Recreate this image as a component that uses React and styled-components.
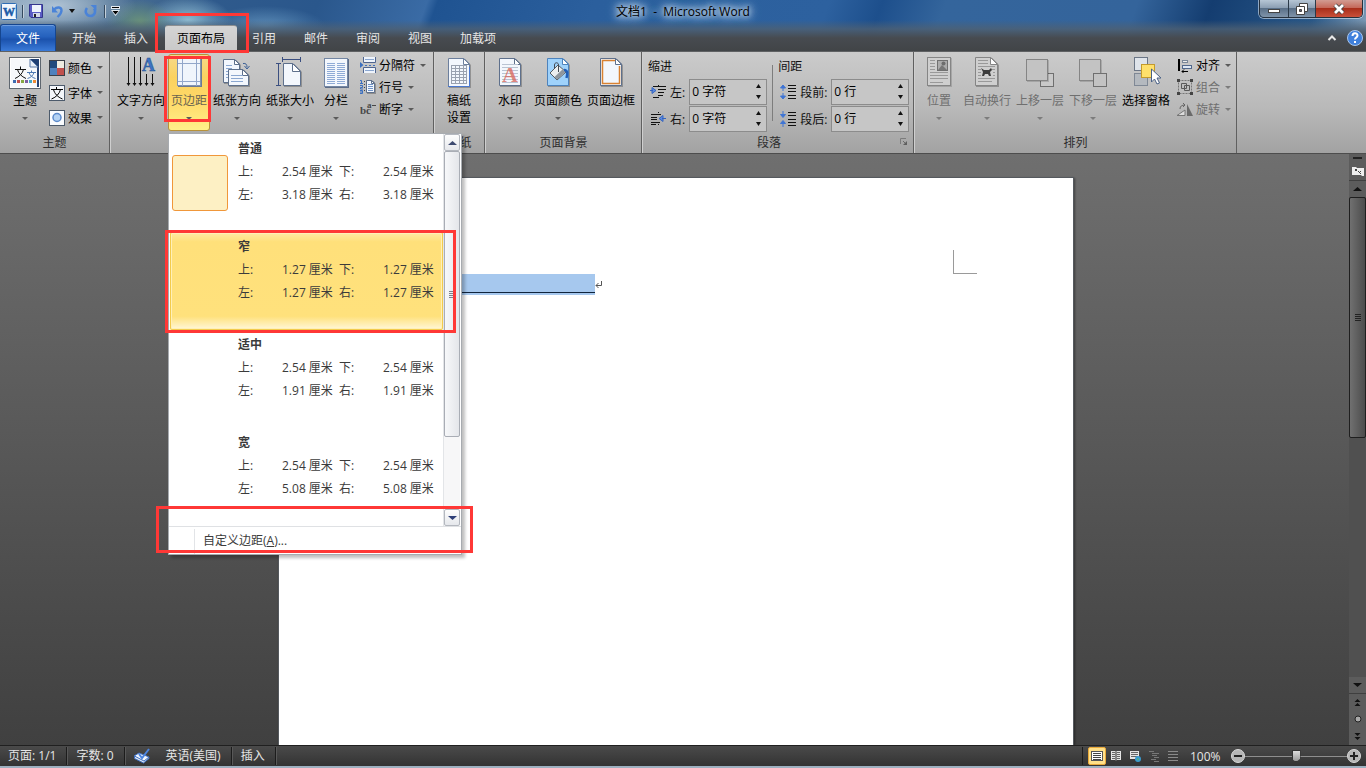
import React, { Fragment } from 'react';
import styled, { createGlobalStyle, css } from 'styled-components';

const GlobalStyle = createGlobalStyle`
  * {
    box-sizing: border-box;
  }

  body {
    margin: 0;
    background: #404040;
  }

  body, button, input {
    font-family: 'Open Sans', 'Noto Sans CJK SC', sans-serif;
    font-size: 12px;
    color: #111;
  }

  button {
    border: 0;
    padding: 0;
    background: none;
  }

  svg {
    display: block;
    flex: none;
  }
`;

const Window = styled.div`
  display: flex;
  flex-direction: column;
  min-height: 100vh;
`;

/* ---------- title bar and tabs ---------- */

const Header = styled.header`
  background:
    linear-gradient(180deg, transparent 20px, rgba(78, 96, 114, 0.8) 29px, #474b50 38px, #414447 100%),
    radial-gradient(ellipse 80px 28px at 56px 6px, rgba(200, 215, 228, 0.75), transparent),
    radial-gradient(ellipse 34px 22px at 140px 22px, rgba(110, 150, 120, 0.9), transparent),
    radial-gradient(ellipse 44px 24px at 188px 20px, rgba(150, 195, 215, 0.9), transparent),
    radial-gradient(ellipse 60px 20px at 265px 26px, rgba(110, 160, 200, 0.7), transparent),
    linear-gradient(110deg, #7f9bb5 0, #4b6f92 110px, #2f5a8c 200px, #2a578c 300px, #3a6ba5 402px, #1f5391 412px, #2b5f9d 560px, #2d619f 780px, #1d4f8c 830px, #34659c 890px, #34649b 1070px, #143d70 1140px, #285787 1240px, #8ba5bd 100%);
`;

const TitleBar = styled.div`
  display: grid;
  grid-template-columns: 1fr auto 1fr;
  align-items: start;
  height: 24px;
`;

const QuickBar = styled.div`
  display: flex;
  align-items: center;
  height: 22px;
  padding-left: 1px;
`;

const QuickButton = styled.button`
  display: flex;
  margin-right: ${props => props.$gap || 4}px;
`;

const Divider = styled.span`
  width: 1px;
  height: 13px;
  margin-right: 6px;
  background: #34495e;
  box-shadow: 1px 0 #c3cfda;
`;

const Title = styled.h1`
  margin: 0;
  font-size: 12px;
  font-weight: 400;
  line-height: 24px;
  white-space: pre;
  color: #000;
  text-shadow: 0 0 5px #b9cfe6, 0 0 7px #b9cfe6, 0 0 9px #b9cfe6, 0 0 11px #a9c3de, 0 0 14px #a9c3de;
`;

const WindowButtons = styled.div`
  display: flex;
  justify-self: end;
  height: 18px;
  margin-right: 3px;
  border: 1px solid #26313d;
  border-top: 0;
  border-radius: 0 0 5px 5px;
  box-shadow: 0 0 0 1px rgba(220, 232, 244, 0.6);
  overflow: hidden;
`;

const WindowButton = styled.button`
  display: flex;
  align-items: center;
  justify-content: center;
  width: ${props => props.$width}px;
  border-left: ${props => (props.$first ? 0 : 1)}px solid #2b3a49;
  background: ${props =>
    props.$close
      ? 'linear-gradient(#d29c92, #c5695a 45%, #a92f1b 50%, #c9503a)'
      : 'linear-gradient(#b6c6d5, #8c9fb3 45%, #5a7088 50%, #7f94aa)'};
`;

const Tabs = styled.nav`
  display: flex;
  align-items: flex-end;
  height: 27px;
`;

const FileTab = styled.button`
  width: 56px;
  height: 27px;
  margin-right: 2px;
  border: 1px solid #16468f;
  border-bottom: 0;
  border-radius: 3px 3px 0 0;
  background: linear-gradient(#3f7bd0, #2561bd 45%, #1b52ad 55%, #3a7ad8);
  box-shadow: inset 0 1px #6d9de0;
  color: #fff;
`;

const Tab = styled.button`
  position: relative;
  height: 26px;
  padding: 0 14px 1px;
  color: #e6e6e6;
  white-space: nowrap;

  ${props => props.$active && css`
    margin: 0 1px 0 3px;
    padding: 0 12px 1px;
    border: 1px solid #8d8f91;
    border-width: 1px 0 0;
    border-radius: 3px 3px 0 0;
    background: linear-gradient(#d5d5d5, #c8c8c8);
    color: #000;
  `}
`;

const TabTools = styled.div`
  display: flex;
  align-items: center;
  gap: 8px;
  height: 27px;
  margin-left: auto;
  padding-right: 3px;
`;

const IconButton = styled.button`
  display: flex;
  align-items: center;
  justify-content: center;
`;

/* Red frame drawn round a step of the tutorial */
const Mark = styled.span`
  position: absolute;
  z-index: 5;
  inset: ${props => props.$inset};
  border: 3px solid #ff3836;
  pointer-events: none;
`;

/* ---------- ribbon ---------- */

const Ribbon = styled.section`
  display: flex;
  height: 103px;
  border-top: 1px solid #5f6163;
  border-bottom: 1px solid #4d4d4d;
  background: linear-gradient(#cbcbcb, #b9b9b9 55%, #a2a2a2);
`;

const Group = styled.div`
  display: flex;
  flex-direction: column;
  flex: none;
  width: ${props => props.$width}px;
  border-right: 1px solid #606060;
  border-left: ${props => (props.$first ? 0 : 1)}px solid #cfcfcf;
`;

const GroupBody = styled.div`
  display: flex;
  gap: 1px;
  height: 79px;
  padding: 2px 0 0 ${props => (props.$pad === undefined ? 3 : props.$pad)}px;
`;

const GroupName = styled.div`
  display: flex;
  align-items: center;
  height: 22px;
  color: #2e2e2e;

  span {
    flex: 1;
    text-align: center;
  }
`;

const Launcher = styled(IconButton)`
  width: 18px;
`;

const ButtonWrap = styled.div`
  position: relative;
`;

const BigButton = styled.button`
  display: flex;
  flex-direction: column;
  align-items: center;
  width: ${props => props.$width}px;
  height: 77px;
  padding-top: ${props => (props.$open ? 2 : 3)}px;
  border-radius: 3px;
  white-space: nowrap;
  color: ${props => (props.$disabled ? '#6f6f6f' : '#000')};

  ${props => props.$open && css`
    border: 1px solid #b8923a;
    background: linear-gradient(#f5d98a, #fbd25f 30%, #ffd867 60%, #fff08a);
    color: #6a6450;
  `}
`;

const BigLabel = styled.span`
  line-height: ${props => (props.$lines ? 17 : 24)}px;
  padding-top: ${props => (props.$lines ? 3 : 0)}px;
  white-space: pre;
`;

const Arrow = styled.span`
  width: 0;
  height: 0;
  margin-top: ${props => (props.$small ? 0 : 4)}px;
  border: 3px solid transparent;
  border-top-color: ${props => (props.$faded ? '#7c7c7c' : '#5a5a5a')};
  border-bottom: 0;
`;

const Stack = styled.div`
  display: flex;
  flex-direction: column;
  padding: ${props => (props.$tall ? '1px 0 0 2px' : '0 0 0 4px')};
`;

const SmallButton = styled.button`
  display: flex;
  align-items: center;
  gap: 3px;
  height: ${props => (props.$tall ? 25 : 22)}px;
  white-space: nowrap;
  color: ${props => (props.$disabled ? '#6f6f6f' : '#000')};

  ${Arrow} {
    margin-left: 2px;
  }
`;

const Fields = styled.div`
  display: grid;
  grid-template-columns: 18px auto 78px;
  grid-template-rows: 24px 27px 27px;
  align-items: center;
  column-gap: 4px;
  padding: ${props => props.$padding};

  > svg {
    justify-self: end;
  }

  h3 {
    grid-column: 1 / -1;
    margin: 0;
    font-size: 12px;
    font-weight: 400;
  }
`;

const FieldLine = styled.span`
  width: 1px;
  height: 56px;
  margin-top: 11px;
  background: #7d7d7d;
`;

const Spinner = styled.div`
  display: flex;
  height: 26px;
  border: 1px solid #8c8c8c;
  background: #c6c6c6;

  input {
    flex: 1;
    min-width: 0;
    padding: 0 2px 2px;
    border: 0;
    background: none;
    color: #000;
  }
`;

const SpinButtons = styled.div`
  display: flex;
  flex-direction: column;
  justify-content: space-evenly;
  width: 16px;

  button {
    height: 8px;
  }
`;

/* ---------- margins menu ---------- */

const Menu = styled.div`
  position: absolute;
  z-index: 4;
  top: 79px;
  left: 0;
  width: 294px;
  border: 1px solid #a7abb0;
  background: #fff;
  box-shadow: 3px 3px 3px rgba(0, 0, 0, 0.25);
`;

const MenuBody = styled.div`
  display: flex;
`;

const MenuList = styled.div`
  flex: 1;
  padding-left: 1px;
`;

const Preset = styled.button`
  position: relative;
  display: flex;
  width: 100%;
  height: 98px;
  padding: 2px 0 0 2px;
  gap: 10px;
  text-align: left;
  color: #3b3b3b;

  ${props => props.$hover && css`
    border-radius: 2px;
    background: linear-gradient(#ffeaa8, #ffe07a 10%, #ffe17c 86%, #fff3c8 97%, #fffbe8);
    box-shadow: inset 0 0 0 1px #f3cb4c, inset 0 0 0 2px #fff0b8;
  `}
`;

const Thumb = styled.span`
  width: 56px;
  height: 56px;
  margin-top: 19px;
  border: 1px solid ${props => (props.$selected ? '#f0973a' : 'transparent')};
  border-radius: 3px;
  background: ${props => (props.$selected ? '#fdf0c4' : 'transparent')};
`;

const PresetText = styled.span`
  display: grid;
  grid-template-columns: 44px 57px 44px auto;
  grid-auto-rows: 23px;
  align-items: center;

  strong {
    grid-column: 1 / -1;
  }
`;

const MenuScroll = styled.div`
  display: flex;
  flex-direction: column;
  width: 17px;
  margin-right: 1px;
  border-left: 1px solid #e3e5e8;
  background: #f7f7f8;
`;

const MenuScrollButton = styled.button`
  display: flex;
  align-items: center;
  justify-content: center;
  height: 17px;
  border: 1px solid #b4b8bf;
  border-radius: 2px;
  background: linear-gradient(#fdfdfd, #e6e8ec);
`;

const MenuScrollThumb = styled.div`
  display: flex;
  align-items: center;
  justify-content: center;
  height: 286px;
  margin-bottom: auto;
  border: 1px solid #a9adb5;
  border-radius: 2px;
  background: linear-gradient(90deg, #f7f8fa, #e4e6ea);
`;

const Grip = styled.span`
  width: 6px;
  height: 7px;
  background: repeating-linear-gradient(${props => props.$color} 0 1px, transparent 1px 2px);
`;

const MenuFooter = styled.div`
  position: relative;
  display: flex;
  height: 28px;
  border-top: 1px solid #dfe1e4;

  button {
    margin: 2px 0 0 25px;
    padding: 0 0 3px 8px;
    border-left: 1px solid #e2e4e7;
    color: #3b3b3b;
  }
`;

/* ---------- document ---------- */

const Workspace = styled.main`
  display: flex;
  flex: 1;
  background: linear-gradient(#6f6f6f, #404040);
`;

const Canvas = styled.div`
  display: flex;
  flex: 1;
  justify-content: center;
  padding: 23px 0 0 3px;
`;

const Paper = styled.div`
  display: flex;
  flex-direction: column;
  width: 796px;
  padding: 72px 96px 0 120px;
  border: 1px solid #55595e;
  border-bottom: 0;
  background: #fff;
  box-shadow: 1px 1px 2px rgba(0, 0, 0, 0.4);
`;

const MarginCorner = styled.span`
  align-self: flex-end;
  width: 24px;
  height: 24px;
  border: 1px solid #9a9a9a;
  border-width: 0 0 1px 1px;
`;

const Paragraph = styled.p`
  display: flex;
  align-items: center;
  margin: 0;
`;

const Selection = styled.span`
  width: 196px;
  height: 21px;
  border-bottom: 2px solid #a6c8ee;
  background: linear-gradient(#a6c8ee 18px, #10243c 18px);
`;

const Scrollbar = styled.aside`
  display: flex;
  flex-direction: column;
  width: 17px;
  background: #5c5c5c;
`;

const ScrollButton = styled(IconButton)`
  height: ${props => props.$height}px;
  border-top: ${props => (props.$line ? 1 : 0)}px solid #3f3f3f;
`;

const ScrollTrack = styled.div`
  flex: 1;
  background: #505050;
`;

const ScrollThumb = styled.div`
  display: flex;
  align-items: center;
  justify-content: center;
  height: 241px;
  border: 1px solid #1f1f1f;
  border-radius: 2px;
  background: linear-gradient(90deg, #707070, #4c4c4c);
`;

/* ---------- status bar ---------- */

const StatusBar = styled.footer`
  display: flex;
  align-items: center;
  height: 23px;
  border-top: 1px solid #202020;
  border-bottom: 2px solid #9db0c0;
  background: linear-gradient(#4a4a4a, #333);
`;

const StatusItem = styled.button`
  height: 18px;
  padding: 0 10px 0 8px;
  border-right: 1px solid #1c1c1c;
  box-shadow: 1px 0 #585858;
  line-height: 18px;
  color: #e6e6e6;
  white-space: nowrap;

  & + & {
    padding-left: 9px;
  }
`;

const Language = styled.span`
  display: flex;
  align-items: center;
  gap: 16px;
`;

const Views = styled.div`
  display: flex;
  align-items: center;
  gap: 1px;
  margin-left: auto;
  padding-left: 5px;
  border-left: 1px solid #1c1c1c;
`;

const ViewButton = styled(IconButton)`
  width: 18px;
  height: 18px;
  border-radius: 2px;

  ${props => props.$active && css`
    border: 1px solid #e8a93a;
    background: #ffe08a;
  `}
`;

const Zoom = styled.div`
  display: flex;
  align-items: center;
  padding: 0 5px 0 8px;
  color: #e6e6e6;

  > span {
    width: 41px;
  }
`;

const ZoomRange = styled.input`
  appearance: none;
  width: 102px;
  height: 14px;
  margin: 0;
  background: linear-gradient(#8e8e8e, #8e8e8e) 0 7px / 100% 1px no-repeat;

  &::-webkit-slider-thumb {
    appearance: none;
    width: 9px;
    height: 12px;
    border: 1px solid #333;
    background: linear-gradient(#ddd, #999);
    clip-path: polygon(0 0, 100% 0, 100% 70%, 50% 100%, 0 70%);
  }
`;

/* ---------- icons ---------- */

const Icon = ({ size = 32, width, children }) => (
  <svg width={width || size} height={size} viewBox={`0 0 ${width || size} ${size}`} fill='none' aria-hidden='true'>
    {children}
  </svg>
);

const serif = "'Liberation Serif', serif";

const lines = (x1, x2, from, to, step) => {
  let d = '';
  for (let y = from; y <= to; y += step) d += `M${x1} ${y}.5H${x2}`;
  return d;
};

const Sheet = ({ x = 5, y = 2, w = 22, h = 28, fold = 6, fill = '#f3f7fd', stroke = '#5e708c' }) => (
  <Fragment>
    <path d={`M${x + 1} ${y + 1}H${x + w - fold + 1}L${x + w + 1} ${y + fold + 1}V${y + h + 1}H${x + 1}Z`} fill='rgba(0,0,0,.25)' />
    <path d={`M${x + 0.5} ${y + 0.5}H${x + w - fold}L${x + w - 0.5} ${y + fold}V${y + h - 0.5}H${x + 0.5}Z`} fill={fill} stroke={stroke} />
    <path d={`M${x + w - fold - 0.5} ${y + 0.5}V${y + fold + 0.5}H${x + w - 0.5}Z`} fill='#fff' stroke={stroke} />
  </Fragment>
);

const ThemeIcon = () => (
  <Icon>
    <rect x='.5' y='.5' width='31' height='31' fill='#fff' stroke='#5f6770' />
    <path d='M2 2h28v28H2z' fill='#f6f8fb' />
    <path d='M21 2h9v9z' fill='#1f3f73' />
    <path d='M28 9h2v21h-2z' fill='#2a4677' />
    <path d='M21 2l8 8h-8z' fill='#e8eef7' stroke='#5a7ba8' />
    <path d='M6 12.500h11M11.500 9.500v3M8.500 12.500c1 4 4 7 8.500 9M14.500 12.500c-1 4-4 7-8.500 9' stroke='#111' />
    <path d='M18 15.500h9M22.500 13.500v2M20 15.500c1 3 3 5 6.500 6M25 15.500c-1 3-3 5-6.500 6' stroke='#4c79b4' />
    <path d='M4 23h3v3H4z' fill='#3f6cb0' /><path d='M8 23h3v3H8z' fill='#c0504d' /><path d='M12 23h3v3h-3z' fill='#86a844' />
    <path d='M16 23h3v3h-3z' fill='#7d60a0' /><path d='M20 23h3v3h-3z' fill='#46aac5' /><path d='M24 23h3v3h-3z' fill='#f08c36' />
  </Icon>
);

const ColorsIcon = () => (
  <Icon size={16}>
    <rect width='16' height='16' fill='#3a3f48' />
    <path d='M1 1h7v7H1z' fill='#1f497d' /><path d='M8 1h7v7H8z' fill='#eeece1' />
    <path d='M1 8h7v7H1z' fill='#4f81bd' /><path d='M8 8h7v7H8z' fill='#c0504d' />
  </Icon>
);

const FontsIcon = () => (
  <Icon size={16}>
    <rect x='.5' y='.5' width='15' height='15' fill='#f4f7fb' stroke='#4c5a6b' />
    <path d='M2 4.500h12M7.500 2v2.500M4.500 4.500c1 4 4 7.500 9 9.500M11.500 4.500c-1 4-4 7.500-9 9.500' stroke='#000' />
  </Icon>
);

const EffectsIcon = () => (
  <Icon size={16}>
    <rect x='.5' y='.5' width='15' height='15' fill='#fafcff' stroke='#4c5a6b' />
    <circle cx='8' cy='7.500' r='4' fill='#b4d2f3' stroke='#5b8acb' strokeWidth='1.500' />
  </Icon>
);

const TextDirectionIcon = () => (
  <Icon>
    <path d='M3.500 0v28M9.500 0v28M15.500 0v28M21.500 17v11M27.500 17v11' stroke='#111' />
    <path d='M1.500 26l2 3 2-3zM7.500 26l2 3 2-3zM13.500 26l2 3 2-3zM19.500 26l2 3 2-3zM25.500 26l2 3 2-3z' fill='#111' />
    <text x='17' y='14' fontFamily={serif} fontSize='18' fontWeight='700' fill='#3d74c4' stroke='#24508f' strokeWidth='.5'>A</text>
  </Icon>
);

const MarginsIcon = () => (
  <Icon>
    <rect x='5' y='2' width='24' height='28' fill='#6d7a92' />
    <rect x='4.500' y='1.500' width='23' height='27' fill='#f0f5fc' stroke='#8193b0' />
    <path d='M9.500 2v27M23.500 2v27M5 6.500h22M5 24.500h22' stroke='#93a7ca' />
  </Icon>
);

const OrientationIcon = () => (
  <Icon>
    <Sheet x={2} y={2} w={17} h={24} fold={5} />
    <path d={lines(5, 11, 8, 22, 3)} stroke='#8ba7d0' />
    <Sheet x={7} y={12} w={21} h={17} fold={6} />
    <path d={lines(10, 22, 18, 26, 3)} stroke='#8ba7d0' />
    <path d='M22 6.500c3-.5 4 1 4 4M23.500 9l2.500 3 2.500-3' stroke='#3b5f96' />
  </Icon>
);

const SizeIcon = () => (
  <Icon>
    <path d='M8.500 2.500h18M8.500 0v5M26.500 0v5M4.500 6.500v22M2 6.500h5M2 28.500h5' stroke='#3b4f80' />
    <Sheet x={9} y={6} w={18} h={23} fold={8} />
  </Icon>
);

const ColumnsIcon = () => (
  <Icon>
    <rect x='5' y='2' width='24' height='29' fill='#5c6c88' />
    <rect x='4.500' y='1.500' width='23' height='28' fill='#f3f7fd' stroke='#7386a3' />
    <path d={lines(7, 15, 6, 26, 2) + lines(17, 25, 6, 26, 2)} stroke='#8fabd6' />
  </Icon>
);

const BreaksIcon = () => (
  <Icon size={16}>
    <path d='M3.500 0v5.500h12V0M3.500 16v-5.500h12V16' fill='#eef4fc' stroke='#4f6590' />
    <path d='M5 2.500h9M5 13.500h9' stroke='#8ba7d0' />
    <path d='M0 5l3.500 3L0 11z' fill='#3a6fc0' /><path d='M5 8.500h2M9 8.500h2M13 8.500h2' stroke='#3a6fc0' />
  </Icon>
);

const LineNumberIcon = () => (
  <Icon size={16}>
    <path d='M0 1.500h1.500v3M0 4.500h3M0 6.500h2.500v2H.5v1.500h2.500M0 11.500h2.500v3H0M0 13h2' stroke='#3a6fc0' />
    <path d='M4.500 2v12' stroke='#444' strokeDasharray='1 2' />
    <Sheet x={6} y={1} w={9} h={13} fold={3} />
    <path d={lines(8, 13, 5, 12, 2)} stroke='#6f93c8' />
  </Icon>
);

const HyphenIcon = () => (
  <Icon size={16}>
    <text x='0' y='13' fontFamily={serif} fontSize='11' fontWeight='700' fill='#474747'>
      bc<tspan x='7' y='7' fontSize='9'>a</tspan>
    </text>
    <path d='M12 4.500h4' stroke='#474747' />
  </Icon>
);

const GridPaperIcon = () => (
  <Icon>
    <Sheet x={5} y={1} w={22} h={29} stroke='#6c7f9d' />
    <path d={lines(8, 24, 8, 26, 3) + 'M8.500 8v19M12.500 8v19M16.500 8v19M20.500 8v19M23.500 8v19'} stroke='#9aa2b0' />
    <path d='M5 29.500h21.500V10' stroke='#4a78d0' />
  </Icon>
);

const WatermarkIcon = () => (
  <Icon>
    <Sheet x={5} y={1} w={22} h={28} />
    <path d={lines(8, 24, 7, 25, 3)} stroke='#b9c3d2' />
    <text x='8' y='25' fontFamily={serif} fontSize='22' fontWeight='700' fill='#d9685c' fillOpacity='.8'>A</text>
  </Icon>
);

const PageColorIcon = () => (
  <Icon>
    <Sheet x={5} y={1} w={22} h={28} fill='#9fd2fb' stroke='#4d83bd' />
    <path d='M8 16l8-8 8 7-9 8z' fill='#eceeef' stroke='#555b62' />
    <path d='M15 22.500l8.500-7.500-3-2.500-8 7.500z' fill='#8f969d' />
    <path d='M12.500 12V8c0-3 4-3 4 0v7' stroke='#444b53' />
    <path d='M22 13c4 0 3.500 4 2.500 8' stroke='#225fb8' strokeWidth='2.500' />
  </Icon>
);

const PageBorderIcon = () => (
  <Icon>
    <Sheet x={5} y={1} w={22} h={28} />
    <path d='M20 3.500H7.500v23h17V9' stroke='#d98232' strokeWidth='1.500' />
  </Icon>
);

const IndentIcon = ({ right }) => (
  <Icon size={16}>
    <path d='M8.500 1v2M8.500 13v2' stroke='#111' strokeDasharray='1 1' />
    {right ? (
      <path d='M1 3.500h10M1 6.500h6M1 8.500h6M1 11.500h9M1 13.500h5' stroke='#111' />
    ) : (
      <path d='M3 2.500h13M8 5.500h8M8 8.500h6M8 11.500h5M3 13.500h6' stroke='#111' />
    )}
    {right ? (
      <path d='M16 7.500h-4M13 4.500l-4 3 4 3z' stroke='#3565c0' fill='#5d8be0' />
    ) : (
      <path d='M0 6.500h3M2 3.500l4 3-4 3z' stroke='#3565c0' fill='#5d8be0' />
    )}
  </Icon>
);

const SpaceIcon = ({ after }) => (
  <Icon size={16}>
    <path d='M8 1.500h8M8 4.500h8M8 11.500h8M8 14.500h8' stroke='#111' />
    <path d={after ? 'M8 8.500h8' : 'M8 7.500h8'} stroke='#111' />
    {after ? (
      <path d='M3 0v4M.5 3.500L3 6.500l2.500-3zM3 16v-4M.5 12.500L3 9.500l2.500 3z' fill='#3f75d4' stroke='#3f75d4' />
    ) : (
      <path d='M3 7V3M.5 4L3 1l2.500 3zM3 9v4M.5 12L3 15l2.500-3z' fill='#3f75d4' stroke='#3f75d4' />
    )}
  </Icon>
);

const PositionIcon = () => (
  <Icon>
    <rect x='5' y='1' width='24' height='29' fill='rgba(0,0,0,.15)' />
    <rect x='4.500' y='.5' width='23' height='28' fill='#cfcfcf' stroke='#858585' />
    <path d={lines(7, 12, 3, 12, 3) + lines(7, 25, 15, 22, 3) + 'M7 25.500h13'} stroke='#999' />
    <rect x='14.500' y='3.500' width='10' height='10' fill='#ababab' stroke='#707070' />
    <path d='M15 13l4-5 5 5z' fill='#777' /><circle cx='20.500' cy='6.500' r='2' fill='#6d6d6d' />
  </Icon>
);

const WrapIcon = () => (
  <Icon>
    <Sheet x={4} y={0} w={23} h={29} fold={7} fill='#cfcfcf' stroke='#858585' />
    <path d={lines(7, 17, 3, 6, 3) + 'M7 9.500h17M7 12.500h3M7 15.500h3M7 18.500h3M21 12.500h3M22 15.500h2M22 18.500h2M7 21.500h17M7 24.500h14'} stroke='#999' />
    <path d='M10 11l3 2h5l2-2 1 2-2 2 1 4h-2l-1-2h-3l-1 2h-2l1-4z' fill='#3c3c3c' />
  </Icon>
);

const LayerIcon = ({ back }) => (
  <Icon>
    {!back && <rect x='16.500' y='16.500' width='13' height='13' fill='#c9c9c9' stroke='#6f6f6f' />}
    <rect x='3' y='3' width='22' height='22' fill='rgba(0,0,0,.15)' />
    <rect x='2.500' y='2.500' width='21' height='21' fill='#c3c3c3' stroke='#858585' />
    {back && <rect x='16.500' y='16.500' width='13' height='13' fill='#c3c3c3' stroke='#6f6f6f' />}
  </Icon>
);

const SelectPaneIcon = () => (
  <Icon>
    <rect x='4.500' y='.5' width='13' height='13' fill='#dfe4ea' stroke='#6b7686' />
    <rect x='4.500' y='16.500' width='13' height='12' fill='#b4b9bf' stroke='#7f8895' />
    <rect x='11.500' y='7.500' width='13' height='13' fill='#ffe06b' stroke='#c49a2c' />
    <path d='M21.500 12v13l3-3 2.500 5 2.500-1-2.500-5h4z' fill='#fff' stroke='#4b6286' />
  </Icon>
);

const AlignIcon = () => (
  <Icon size={16}>
    <path d='M2 2v12' stroke='#000' strokeWidth='2' />
    <rect x='5.500' y='3.500' width='5' height='2' fill='#eee' stroke='#7a8798' />
    <rect x='5.500' y='8.500' width='9' height='3' fill='#dfe8f4' stroke='#52698c' />
    <path d='M5 14.500h6M7 12.500l-2 2 2 2' stroke='#000' />
  </Icon>
);

const GroupIcon = () => (
  <Icon size={16}>
    <path d='M1.500 1.500h13v13h-13z' stroke='#777' strokeDasharray='2 1' />
    <path d='M4.500 4.500h5v5h-5zM7.500 6.500h5v5h-5z' stroke='#5a5a5a' />
    <path d='M0 0h3v3H0zM13 0h3v3h-3zM0 13h3v3H0zM13 13h3v3h-3z' fill='#444' />
  </Icon>
);

const RotateIcon = () => (
  <Icon size={16}>
    <path d='M0 14.500L8 9v5.500z' fill='#ddd' stroke='#777' /><path d='M10 3l6 12h-6z' fill='#6a6a6a' />
    <path d='M3 8c0-3 2-4 5-4M6 2l2 2-2 2' stroke='#666' />
  </Icon>
);

const WordIcon = () => (
  <Icon size={17}>
    <rect x='.5' y='.5' width='15' height='16' rx='1' fill='#f2f7fd' stroke='#2e6db4' />
    <path d='M14 2h1v13h-1z' fill='#b8d2ee' />
    <text x='2' y='13' fontFamily={serif} fontSize='12' fontWeight='700' fill='#1e5ca8' stroke='#1e5ca8' strokeWidth='.5'>W</text>
  </Icon>
);

const SaveIcon = () => (
  <Icon size={14}>
    <path d='M.5.5h13v13H2l-1.500-1.500z' fill='#5a5cc4' stroke='#34368c' />
    <path d='M3 1h9v7H3z' fill='#eef3fb' /><path d='M4 9h7v4H4z' fill='#d4d8ea' /><path d='M5 10h2v3H5z' fill='#222' />
  </Icon>
);

const UndoIcon = () => (
  <Icon size={13}>
    <path d='M3 4.500c3-3 7.500-2.500 7.500 1 0 3-2 4.500-4 6.500' stroke='#4a83d8' strokeWidth='2.400' /><path d='M1 1v6.500h6z' fill='#4a83d8' />
  </Icon>
);

const RedoIcon = () => (
  <Icon size={13}>
    <path d='M3 3c-3 4 0 8 3.500 8s6-4 3.500-7.500' stroke='#4a83d8' strokeWidth='2.600' /><path d='M6.500 0h6v5.500z' fill='#4a83d8' />
  </Icon>
);

const CustomizeIcon = () => (
  <Icon size={10} width={9}>
    <path d='M0 0h9v3H0zM0 4h9L4.500 10z' fill='#e4eaf0' />
    <path d='M1 1h7v1H1zM1.500 5h6l-3 3.500z' fill='#000' />
  </Icon>
);

const Triangle = ({ up, color = '#111', width = 7 }) => (
  <Icon size={4} width={width}>
    <path d={up ? `M0 4L${width / 2} 0L${width} 4z` : `M0 0L${width / 2} 4L${width} 0z`} fill={color} />
  </Icon>
);

const HelpIcon = () => (
  <Icon size={16}>
    <circle cx='8' cy='8' r='7.500' fill='#3f80dc' stroke='#a8c6ee' />
    <path d='M5.500 6c0-3.500 5-3.500 5-.5 0 2-2.500 2-2.500 4M8 11v2' stroke='#fff' strokeWidth='2' />
  </Icon>
);

const LauncherIcon = () => (
  <Icon size={8}>
    <path d='M.5 6V.5H6' stroke='#7c7c7c' /><path d='M3 3l3 3' stroke='#6a6a6a' /><path d='M7 3v4H3z' fill='#5f5f5f' />
  </Icon>
);

const ProofIcon = () => (
  <Icon size={16}>
    <path d='M0 8l5-3 10 4-5 5z' fill='#f2f6fc' stroke='#3f6fc0' /><path d='M.5 8v2.500l9 4.500 5.500-4.500V9l-5 4z' stroke='#3f6fc0' fill='#dce6f5' />
    <path d='M5 6l3 4 7-9' stroke='#4b84e0' strokeWidth='2' />
  </Icon>
);

const ViewIcon = ({ kind }) => (
  <Icon size={12}>
    {kind === 'print' && <Fragment><rect x='.5' y='1.500' width='11' height='9' fill='#fff' stroke='#555' /><path d={lines(2, 10, 3, 9, 2)} stroke='#444' /></Fragment>}
    {kind === 'read' && <Fragment><path d='M1 1h4l1 1 1-1h4v9H7l-1 1-1-1H1z' fill='#e4e4e4' /><path d={lines(2, 5, 2, 8, 2) + lines(7, 10, 2, 8, 2)} stroke='#666' /><path d='M6 2v9' stroke='#222' /></Fragment>}
    {kind === 'web' && <Fragment><path d='M1 1h9v8H1z' fill='#e4e4e4' /><path d={lines(2, 9, 2, 7, 2)} stroke='#666' /><circle cx='9' cy='9' r='3' fill='#3a9ad0' /><path d='M8 8l2 1-1 2z' fill='#5cb85c' /></Fragment>}
    {kind === 'outline' && <path d='M1 1.500h5M4 3.500h7M4 5.500h5M6 7.500h5M3 9.500h5M6 11.500h5' stroke='#777' />}
    {kind === 'draft' && <path d={lines(1, 11, 1, 10, 3)} stroke='#8a8a8a' />}
  </Icon>
);

const ZoomIcon = ({ plus }) => (
  <Icon size={14}>
    <circle cx='7' cy='7' r='6.500' fill='#b5b5b5' stroke='#d8d8d8' />
    <path d={plus ? 'M3 7h8M7 3v8' : 'M3 7h8'} stroke='#222' strokeWidth='2' />
  </Icon>
);

/* ---------- parts ---------- */

const Big = ({ icon, label, width = 52, arrow = true, disabled, lines: twoLines, open }) => (
  <BigButton type='button' $width={width} $disabled={disabled} $open={open}>
    {icon}
    <BigLabel $lines={twoLines}>{label}</BigLabel>
    {arrow && <Arrow $faded={disabled} />}
  </BigButton>
);

const Small = ({ icon, label, tall, disabled }) => (
  <SmallButton type='button' $tall={tall} $disabled={disabled}>
    {icon}
    {label}
    <Arrow $small $faded={disabled} />
  </SmallButton>
);

const Field = ({ id, icon, label, value }) => (
  <Fragment>
    {icon}
    <label htmlFor={id}>{label}</label>
    <Spinner>
      <input id={id} type='text' defaultValue={value} />
      <SpinButtons>
        <IconButton type='button' aria-label='+'><Triangle up width={5} /></IconButton>
        <IconButton type='button' aria-label='-'><Triangle width={5} /></IconButton>
      </SpinButtons>
    </Spinner>
  </Fragment>
);

const presets = [
  { name: '普通', vertical: '2.54 厘米', horizontal: '3.18 厘米', selected: true },
  { name: '窄', vertical: '1.27 厘米', horizontal: '1.27 厘米', hover: true },
  { name: '适中', vertical: '2.54 厘米', horizontal: '1.91 厘米' },
  { name: '宽', vertical: '2.54 厘米', horizontal: '5.08 厘米' }
];

const MarginsMenu = () => (
  <Menu>
    <MenuBody>
      <MenuList>
        {presets.map(({ name, vertical, horizontal, selected, hover }) => (
          <Preset key={name} type='button' $hover={hover}>
            <Thumb $selected={selected} />
            <PresetText>
              <strong>{name}</strong>
              <span>上:</span><span>{vertical}</span>
              <span>下:</span><span>{vertical}</span>
              <span>左:</span><span>{horizontal}</span>
              <span>右:</span><span>{horizontal}</span>
            </PresetText>
            {hover && <Mark $inset='-2px -13px -3px -5px' />}
          </Preset>
        ))}
      </MenuList>
      <MenuScroll>
        <MenuScrollButton type='button' aria-label='▲'><Triangle up color='#3d4a70' width={9} /></MenuScrollButton>
        <MenuScrollThumb><Grip $color='#7d828c' /></MenuScrollThumb>
        <MenuScrollButton type='button' aria-label='▼'><Triangle color='#2f3f78' width={9} /></MenuScrollButton>
      </MenuScroll>
    </MenuBody>
    <MenuFooter>
      <button type='button'>自定义边距(<u>A</u>)...</button>
      <Mark $inset='-21px -12px 1px -13px' />
    </MenuFooter>
  </Menu>
);

const tabs = ['开始', '插入', '页面布局', '引用', '邮件', '审阅', '视图', '加载项'];
const views = ['print', 'read', 'web', 'outline', 'draft'];

const App = () => (
  <Window>
    <GlobalStyle />
    <Header>
      <TitleBar>
        <QuickBar>
          <QuickButton type='button' aria-label='Word'><WordIcon /></QuickButton>
          <Divider />
          <QuickButton type='button' aria-label='保存' $gap={8}><SaveIcon /></QuickButton>
          <QuickButton type='button' aria-label='撤消' $gap={5}><UndoIcon /></QuickButton>
          <QuickButton type='button' aria-label='撤消列表' $gap={9}><Triangle width={6} /></QuickButton>
          <QuickButton type='button' aria-label='重复' $gap={7}><RedoIcon /></QuickButton>
          <Divider />
          <QuickButton type='button' aria-label='自定义'><CustomizeIcon /></QuickButton>
        </QuickBar>
        <Title>{'文档1  -  Microsoft Word'}</Title>
        <WindowButtons>
          <WindowButton type='button' aria-label='最小化' $width={28} $first>
            <Icon size={12}><rect x='.5' y='6.500' width='11' height='3' fill='#fff' stroke='#444' /></Icon>
          </WindowButton>
          <WindowButton type='button' aria-label='还原' $width={27}>
            <Icon size={12}>
              <path d='M3.500.5h8v8h-8z' fill='#fff' stroke='#444' />
              <path d='M.5 3.500h8v8h-8z' fill='#fff' stroke='#444' /><path d='M3.500 6.500h2v2h-2z' fill='#667' stroke='#444' />
            </Icon>
          </WindowButton>
          <WindowButton type='button' aria-label='关闭' $width={47} $close>
            <Icon size={12}>
              <path d='M2 2l8 8M10 2l-8 8' stroke='#444' strokeWidth='4.500' /><path d='M2 2l8 8M10 2l-8 8' stroke='#fff' strokeWidth='2.800' />
            </Icon>
          </WindowButton>
        </WindowButtons>
      </TitleBar>
      <Tabs>
        <FileTab type='button'>文件</FileTab>
        {tabs.map(tab => (
          <Tab key={tab} type='button' $active={tab === '页面布局'}>
            {tab}
            {tab === '页面布局' && <Mark $inset='-13px -12px -2px -10px' />}
          </Tab>
        ))}
        <TabTools>
          <IconButton type='button' aria-label='折叠'>
            <Icon size={14}><path d='M3.500 9L7 5.500 10.500 9' stroke='#e8e8e8' strokeWidth='2' /></Icon>
          </IconButton>
          <IconButton type='button' aria-label='帮助'><HelpIcon /></IconButton>
        </TabTools>
      </Tabs>
    </Header>

    <Ribbon>
      <Group $width={110} $first>
        <GroupBody $pad={4}>
          <Big icon={<ThemeIcon />} label='主题' width={42} />
          <Stack $tall>
            <Small tall icon={<ColorsIcon />} label='颜色' />
            <Small tall icon={<FontsIcon />} label='字体' />
            <Small tall icon={<EffectsIcon />} label='效果' />
          </Stack>
        </GroupBody>
        <GroupName><span>主题</span></GroupName>
      </Group>

      <Group $width={324}>
        <GroupBody $pad={4}>
          <Big icon={<TextDirectionIcon />} label='文字方向' />
          <ButtonWrap>
            <Big icon={<MarginsIcon />} label='页边距' width={42} open />
            <Mark $inset='2px -1px 9px -4px' />
            <MarginsMenu />
          </ButtonWrap>
          <Big icon={<OrientationIcon />} label='纸张方向' />
          <Big icon={<SizeIcon />} label='纸张大小' />
          <Big icon={<ColumnsIcon />} label='分栏' width={38} />
          <Stack>
            <Small icon={<BreaksIcon />} label='分隔符' />
            <Small icon={<LineNumberIcon />} label='行号' />
            <Small icon={<HyphenIcon />} label='断字' />
          </Stack>
        </GroupBody>
      </Group>

      <Group $width={51}>
        <GroupBody>
          <Big icon={<GridPaperIcon />} label={'稿纸\n设置'} width={42} arrow={false} lines />
        </GroupBody>
        <GroupName><span>稿纸</span></GroupName>
      </Group>

      <Group $width={157}>
        <GroupBody>
          <Big icon={<WatermarkIcon />} label='水印' width={42} />
          <Big icon={<PageColorIcon />} label='页面颜色' />
          <Big icon={<PageBorderIcon />} label='页面边框' arrow={false} />
        </GroupBody>
        <GroupName><span>页面背景</span></GroupName>
      </Group>

      <Group $width={272}>
        <GroupBody $pad={0}>
          <Fields $padding='0 4px 0 5px'>
            <h3>缩进</h3>
            <Field id='indent-left' icon={<IndentIcon />} label='左:' value='0 字符' />
            <Field id='indent-right' icon={<IndentIcon right />} label='右:' value='0 字符' />
          </Fields>
          <FieldLine />
          <Fields $padding='0 0 0 4px'>
            <h3>间距</h3>
            <Field id='space-before' icon={<SpaceIcon />} label='段前:' value='0 行' />
            <Field id='space-after' icon={<SpaceIcon after />} label='段后:' value='0 行' />
          </Fields>
        </GroupBody>
        <GroupName>
          <span>段落</span>
          <Launcher type='button' aria-label='段落设置'><LauncherIcon /></Launcher>
        </GroupName>
      </Group>

      <Group $width={323}>
        <GroupBody>
          <Big icon={<PositionIcon />} label='位置' width={42} disabled />
          <Big icon={<WrapIcon />} label='自动换行' disabled />
          <Big icon={<LayerIcon />} label='上移一层' disabled />
          <Big icon={<LayerIcon back />} label='下移一层' disabled />
          <Big icon={<SelectPaneIcon />} label='选择窗格' arrow={false} />
          <Stack>
            <Small icon={<AlignIcon />} label='对齐' />
            <Small icon={<GroupIcon />} label='组合' disabled />
            <Small icon={<RotateIcon />} label='旋转' disabled />
          </Stack>
        </GroupBody>
        <GroupName><span>排列</span></GroupName>
      </Group>
    </Ribbon>

    <Workspace>
      <Canvas>
        <Paper>
          <MarginCorner />
          <Paragraph>
            <Selection />
            <Icon size={9} width={8}><path d='M6.500 1v4.500H1M3.500 3L1 5.500 3.500 8' stroke='#555' /></Icon>
          </Paragraph>
        </Paper>
      </Canvas>
      <Scrollbar>
        <ScrollButton type='button' aria-label='拆分' $height={8}>
          <Icon size={2} width={9}><path d='M0 1h9' stroke='#222' strokeWidth='2' /></Icon>
        </ScrollButton>
        <ScrollButton type='button' aria-label='标尺' $height={18}>
          <Icon size={12}>
            <path d='M0 2h4l1 1h7v8h-2l-1-1H0z' fill='#eee' /><path d='M3 4l2 2M5 4L3 6M6 6l3 3M9 6L7 8' stroke='#444' />
          </Icon>
        </ScrollButton>
        <ScrollButton type='button' aria-label='上' $height={17} $line><Triangle up width={9} /></ScrollButton>
        <ScrollTrack>
          <ScrollThumb><Grip $color='#222' /></ScrollThumb>
        </ScrollTrack>
        <ScrollButton type='button' aria-label='下' $height={16}><Triangle width={9} /></ScrollButton>
        <ScrollButton type='button' aria-label='前一页' $height={17} $line>
          <Icon size={8} width={7}><path d='M.5 4l3-3 3 3zM.5 8l3-3 3 3z' fill='#111' /></Icon>
        </ScrollButton>
        <ScrollButton type='button' aria-label='选择浏览对象' $height={18}>
          <Icon size={8}><circle cx='4' cy='4' r='3' fill='#aaa' stroke='#222' /></Icon>
        </ScrollButton>
        <ScrollButton type='button' aria-label='下一页' $height={17}>
          <Icon size={8} width={7}><path d='M.5 0l3 3 3-3zM.5 4l3 3 3-3z' fill='#111' /></Icon>
        </ScrollButton>
      </Scrollbar>
    </Workspace>

    <StatusBar>
      <StatusItem type='button'>页面: 1/1</StatusItem>
      <StatusItem type='button'>字数: 0</StatusItem>
      <StatusItem type='button'><Language><ProofIcon />英语(美国)</Language></StatusItem>
      <StatusItem type='button'>插入</StatusItem>
      <Views>
        {views.map((kind, index) => (
          <ViewButton key={kind} type='button' aria-label={kind} $active={index === 0}><ViewIcon kind={kind} /></ViewButton>
        ))}
      </Views>
      <Zoom>
        <span>100%</span>
        <IconButton type='button' aria-label='缩小'><ZoomIcon /></IconButton>
        <ZoomRange type='range' aria-label='显示比例' min='0' max='100' defaultValue='50' />
        <IconButton type='button' aria-label='放大'><ZoomIcon plus /></IconButton>
      </Zoom>
    </StatusBar>
  </Window>
);

export default App;
